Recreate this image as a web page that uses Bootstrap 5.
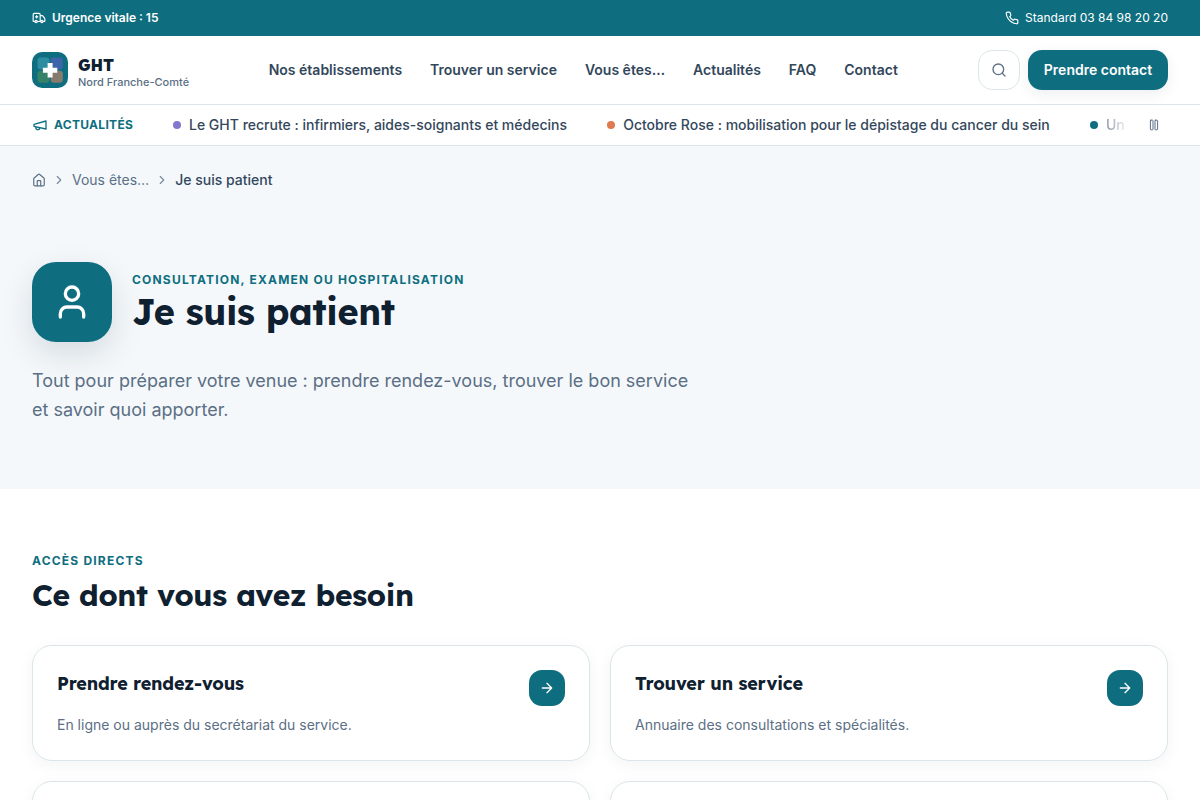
<!DOCTYPE html>
<html lang="fr">
<head>
<meta charset="utf-8">
<meta name="viewport" content="width=device-width, initial-scale=1">
<title>Je suis patient – GHT Nord Franche-Comté</title>
<link href="https://cdn.jsdelivr.net/npm/bootstrap@5.3.0/dist/css/bootstrap.min.css" rel="stylesheet">
<script defer src="https://cdn.jsdelivr.net/npm/bootstrap@5.3.0/dist/js/bootstrap.bundle.min.js"></script>
<style>
:root{--teal:#0e6e80;--ink:#0f2030;--text:#33475b;--muted:#5b6f85;--line:#dbe6ea}
html,body{overflow:hidden;height:800px}
body{font-family:Inter,"Liberation Sans",sans-serif;color:var(--text);font-size:14px;line-height:20px;background:#fff}
svg{fill:none;stroke:currentColor;stroke-width:2;stroke-linecap:round;stroke-linejoin:round;flex:none;display:block}
.page-pad{padding-left:32px;padding-right:32px}
.topbar{height:36px;background:var(--teal);color:#fff;font-size:12px}
.mainnav{height:69px;border-bottom:1px solid var(--line)}
.heading{font-family:Lexend,Inter,sans-serif;font-weight:700;color:var(--ink);margin:0;letter-spacing:-.01em}
.brand-box{width:157px;gap:10px;white-space:nowrap}
.brand-text{padding-top:4px}
.brand-name{font-size:16px;line-height:18px;font-weight:800}
.brand-sub{font-size:11px;line-height:15px;color:var(--muted);padding-top:1px;margin-bottom:-1px;font-weight:450}
.links{gap:28px;margin-left:79.700px;font-weight:600}
.links a{color:var(--text);text-decoration:none}
.search-btn{width:42px;height:40px;border:1px solid var(--line);border-radius:14px;color:var(--muted);background:#fff;padding:0}
.cta{width:140px;height:40px;border-radius:14px;background:var(--teal);color:#fff;font-weight:600;font-size:14px;line-height:20px;padding:0 0 1px;border:0;box-shadow:0 4px 14px rgba(15,32,48,.08);white-space:nowrap}
.ticker{height:41px;border-bottom:1px solid var(--line)}
.ticker-label{font-size:12px;font-weight:700;letter-spacing:.3px;color:var(--teal);width:141px}
.track{width:951px;overflow:hidden;font-weight:500;white-space:nowrap;gap:40.200px}
.dot{width:8px;height:8px;border-radius:50%;flex:none}
.fading{background:linear-gradient(90deg,#8b96a5,#e8ecef);-webkit-background-clip:text;background-clip:text;color:transparent}
.pause rect{stroke-width:1}
.hero{height:343px;background:#f4f8fb;padding-top:24px}
.crumbs{color:var(--muted);height:20px}
.crumbs .chev{margin:0 6px;opacity:.8}
.profile-tile{width:80px;height:80px;border-radius:24px;background:var(--teal);color:#fff;box-shadow:0 12px 32px rgba(15,32,48,.13)}
.kicker{font-size:12px;line-height:16px;font-weight:700;letter-spacing:1.2px;color:var(--teal)}
.hero h1{font-size:36px;line-height:45px;padding-top:1px;margin-bottom:-1px}
.hero-title{padding-top:1px}
.intro{font-size:18px;line-height:29px;color:var(--muted);max-width:672px;margin-top:24px}
.direct{height:311px;overflow:hidden;padding-top:64px}
.direct h2{font-size:30px;line-height:38px;margin-top:7px}
.cards{display:grid;grid-template-columns:1fr 1fr;gap:20px;margin-top:31px}
.tile{height:116px;border:1px solid var(--line);border-radius:20px;padding:24px;box-shadow:0 4px 16px rgba(15,32,48,.05);background:#fff}
.tile h3{font-size:18px;line-height:28px}
.tile p{color:var(--muted);margin:16px 0 0;line-height:22px}
.go{width:36px;height:36px;border-radius:13px;background:var(--teal);color:#fff}
</style>
</head>
<body>
<div class="topbar page-pad d-flex align-items-center justify-content-between">
  <div class="d-flex align-items-center fw-semibold" style="gap:6px">
    <svg width="14" height="14" viewBox="0 0 24 24"><path d="M10 10H6M8 8v4M14 18V6a2 2 0 0 0-2-2H4a2 2 0 0 0-2 2v11a1 1 0 0 0 1 1h2M9 18h6M19 18h2a1 1 0 0 0 1-1v-3.300a2 2 0 0 0-.3-1l-2.800-4A2 2 0 0 0 17.300 8H14"/><circle cx="7" cy="18" r="2"/><circle cx="17" cy="18" r="2"/></svg>
    <span>Urgence vitale : 15</span>
  </div>
  <div class="d-flex align-items-center" style="gap:6px">
    <svg width="14" height="14" viewBox="0 0 24 24"><path d="M22 16.920v3a2 2 0 0 1-2.180 2 19.800 19.800 0 0 1-8.630-3.070 19.500 19.500 0 0 1-6-6 19.800 19.800 0 0 1-3.070-8.670A2 2 0 0 1 4.110 2h3a2 2 0 0 1 2 1.720 12.800 12.800 0 0 0 .7 2.810 2 2 0 0 1-.45 2.110L8.090 9.910a16 16 0 0 0 6 6l1.270-1.270a2 2 0 0 1 2.110-.45 12.800 12.800 0 0 0 2.810.7A2 2 0 0 1 22 16.920z"/></svg>
    <span>Standard 03 84 98 20 20</span>
  </div>
</div>

<header class="mainnav page-pad d-flex align-items-center">
  <div class="brand-box d-flex align-items-center">
    <svg width="36" height="36" viewBox="0 0 36 36" style="stroke:none"><rect width="36" height="36" rx="10" fill="#0e6e80"/><rect x="5.500" y="5.500" width="12" height="12" rx="3" fill="#2e8ca0"/><rect x="18.800" y="5.500" width="12" height="12" rx="3" fill="#3d64aa"/><rect x="5.500" y="18.800" width="12" height="12" rx="3" fill="#348267"/><rect x="18.800" y="18.800" width="12" height="12" rx="3" fill="#877b6e"/><path fill="#fff" d="M15.600 11h5v4.700h4.700v5h-4.700v4.700h-5v-4.700h-4.700v-5h4.700z"/></svg>
    <div class="brand-text">
      <div class="heading brand-name">GHT</div>
      <div class="brand-sub">Nord Franche-Comté</div>
    </div>
  </div>
  <nav class="links d-flex text-nowrap">
    <a href="#">Nos établissements</a><a href="#">Trouver un service</a><a href="#">Vous êtes…</a><a href="#">Actualités</a><a href="#">FAQ</a><a href="#">Contact</a>
  </nav>
  <div class="d-flex gap-2 ms-auto">
    <button class="btn search-btn d-flex align-items-center justify-content-center" aria-label="Rechercher"><svg width="16" height="16" viewBox="0 0 24 24"><circle cx="11" cy="11" r="8"/><path d="m21 21-4.300-4.300"/></svg></button>
    <button class="btn cta">Prendre contact</button>
  </div>
</header>

<div class="ticker page-pad d-flex align-items-center">
  <div class="ticker-label d-flex align-items-center flex-shrink-0" style="gap:6px">
    <svg width="16" height="16" viewBox="0 0 24 24"><path d="m3 11 18-5v12L3 14v-3zM11.600 16.800a3 3 0 1 1-5.800-1.600"/></svg>
    ACTUALITÉS
  </div>
  <div class="track d-flex">
    <div class="d-flex align-items-center gap-2"><span class="dot" style="background:#8278cd"></span>Le GHT recrute : infirmiers, aides-soignants et médecins</div>
    <div class="d-flex align-items-center gap-2"><span class="dot" style="background:#e07a50"></span>Octobre Rose : mobilisation pour le dépistage du cancer du sein</div>
    <div class="d-flex align-items-center gap-2"><span class="dot" style="background:#0e6e80"></span><span class="fading">Un</span></div>
  </div>
  <svg class="pause ms-auto" style="margin-right:8px;color:var(--muted)" width="12" height="12" viewBox="0 0 12 12"><rect x="2.400" y="1.200" width="2.600" height="9.600" rx=".5"/><rect x="7" y="1.200" width="2.600" height="9.600" rx=".5"/></svg>
</div>

<section class="hero page-pad">
  <div class="crumbs d-flex align-items-center">
    <svg width="14" height="14" viewBox="0 0 24 24"><path d="M15 22v-8a1 1 0 0 0-1-1h-4a1 1 0 0 0-1 1v8"/><path d="M3 10a2 2 0 0 1 .7-1.500l7-6a2 2 0 0 1 2.600 0l7 6A2 2 0 0 1 21 10v10a2 2 0 0 1-2 2H5a2 2 0 0 1-2-2z"/></svg>
    <svg class="chev" width="14" height="14" viewBox="0 0 24 24"><path d="m9 18 6-6-6-6"/></svg>
    <span>Vous êtes…</span>
    <svg class="chev" width="14" height="14" viewBox="0 0 24 24"><path d="m9 18 6-6-6-6"/></svg>
    <span style="color:var(--text);font-weight:500">Je suis patient</span>
  </div>
  <div class="d-flex align-items-center" style="margin-top:72px;gap:20px">
    <div class="profile-tile d-flex align-items-center justify-content-center"><svg width="40" height="40" viewBox="0 0 24 24"><path d="M19 21v-2a4 4 0 0 0-4-4H9a4 4 0 0 0-4 4v2"/><circle cx="12" cy="7" r="4"/></svg></div>
    <div class="hero-title"><div class="kicker">CONSULTATION, EXAMEN OU HOSPITALISATION</div><h1 class="heading">Je suis patient</h1></div>
  </div>
  <p class="intro mb-0">Tout pour préparer votre venue : prendre rendez-vous, trouver le bon service et savoir quoi apporter.</p>
</section>

<section class="direct page-pad">
  <div class="kicker">ACCÈS DIRECTS</div>
  <h2 class="heading">Ce dont vous avez besoin</h2>
  <div class="cards">
    <div class="tile d-flex justify-content-between"><div><h3 class="heading">Prendre rendez-vous</h3><p>En ligne ou auprès du secrétariat du service.</p></div><span class="go d-flex align-items-center justify-content-center"><svg width="16" height="16" viewBox="0 0 24 24"><path d="M5 12h14M12 5l7 7-7 7"/></svg></span></div>
    <div class="tile d-flex justify-content-between"><div><h3 class="heading">Trouver un service</h3><p>Annuaire des consultations et spécialités.</p></div><span class="go d-flex align-items-center justify-content-center"><svg width="16" height="16" viewBox="0 0 24 24"><path d="M5 12h14M12 5l7 7-7 7"/></svg></span></div>
    <div class="tile"></div>
    <div class="tile"></div>
  </div>
</section>
</body>
</html>
